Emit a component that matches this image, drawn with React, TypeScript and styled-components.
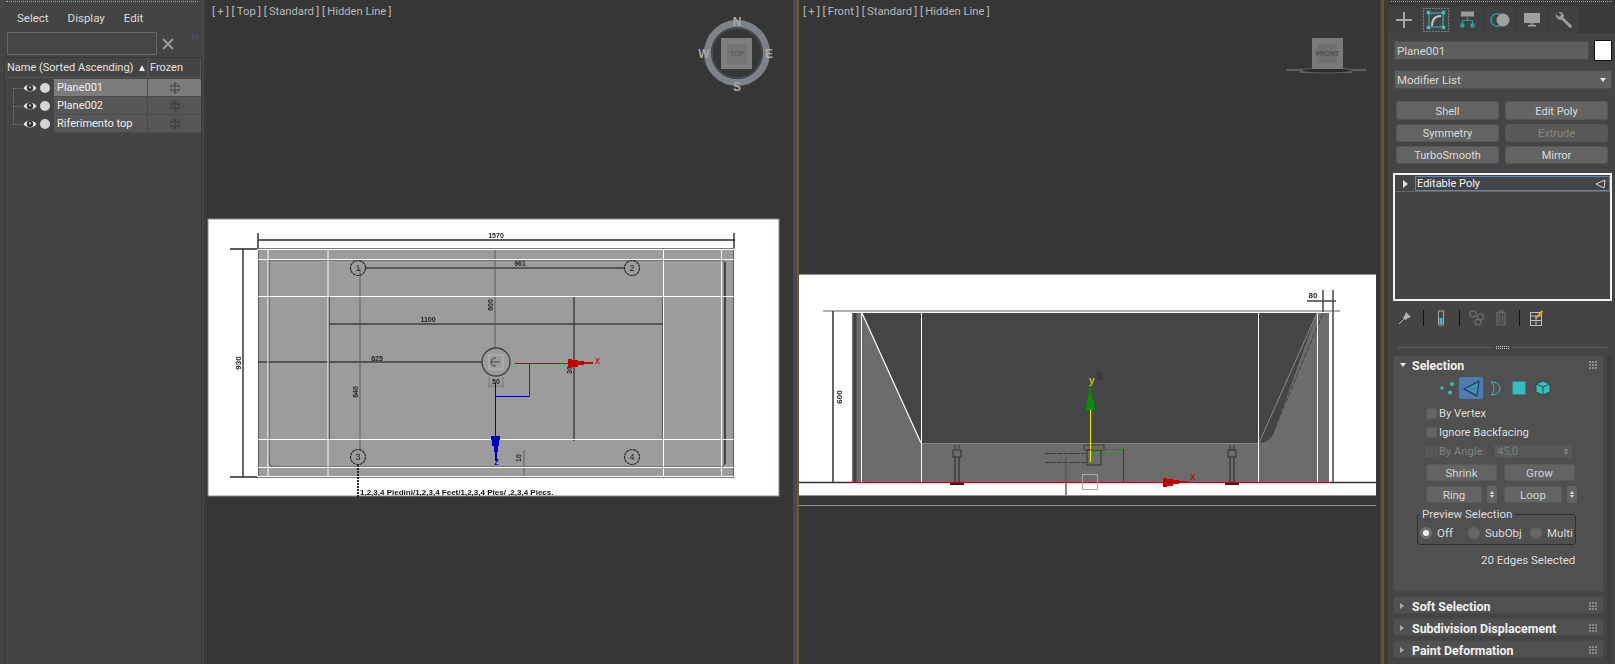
import React from 'react';
import styled, { createGlobalStyle } from 'styled-components';

const GlobalStyle = createGlobalStyle`
    html, body {
        margin: 0;
        padding: 0;
        background: #363636;
        overflow: hidden;
    }
    * {
        box-sizing: border-box;
    }
`;

const UI_FONT = `Roboto, "Noto Sans", "Liberation Sans", sans-serif`;

const Screen = styled.div`
    width: 1615px;
    height: 664px;
    display: flex;
    font-family: ${UI_FONT};
    font-size: 11px;
    color: #dcdcdc;
    overflow: hidden;
    background: #363636;
`;

/* scene explorer */

const Explorer = styled.div`
    width: 206px;
    flex: none;
    display: flex;
    flex-flow: column nowrap;
    background: #444;
    border-right: 2px solid #3a3a3a;
    padding: 1px 0 0 0;
`;

const Grip = styled.div<{ $inset: number }>`
    height: 1px;
    margin: 0 ${p => p.$inset}px;
    border-top: 1px dotted #a0a0a0;
`;

const MenuRow = styled.div`
    display: flex;
    gap: 19px;
    padding: 9px 0 0 17px;
    height: 28px;
    font-size: 11.5px;
`;

const SearchRow = styled.div`
    display: flex;
    align-items: flex-start;
    padding: 2px 0 0 7px;
    height: 27px;
`;

const SearchBox = styled.div`
    width: 150px;
    height: 23px;
    border: 1px solid #666;
    background: #454545;
`;

const ClearGlyph = styled.div`
    width: 22px;
    height: 23px;
    display: flex;
    align-items: center;
    justify-content: center;
`;

const More = styled.div`
    display: flex;
    margin: 2px 0 0 12px;
`;

const Outliner = styled.div`
    flex: 1;
    margin-left: 4px;
    width: 198px;
    border-left: 1px solid #383838;
    border-right: 1px solid #383838;
    border-top: 1px solid #383838;
`;

const HeaderRow = styled.div`
    display: grid;
    grid-template-columns: 143px 53px;
    height: 21px;
    padding-bottom: 1px;
`;

const HeaderCell = styled.div`
    display: flex;
    align-items: center;
    justify-content: space-between;
    padding: 0 0 0 1px;
    border: 1px solid #555;
    border-left-color: #4a4a4a;
    border-top: 0;
    color: #e2e2e2;
    font-size: 11px;
    white-space: nowrap;
`;

const SortArrow = styled.span`
    width: 0;
    height: 0;
    border-left: 3.5px solid transparent;
    border-right: 3.5px solid transparent;
    border-bottom: 6px solid #eee;
    margin-right: 2px;
`;

const Row = styled.div`
    position: relative;
    display: grid;
    grid-template-columns: 49px 94px 53px;
    height: 18px;
`;

const TreeGutter = styled.div`
    display: flex;
    align-items: center;
    padding-left: 18px;
    gap: 3px;
`;

const TreeLine = styled.div`
    position: absolute;
    left: 8px;
    top: 9px;
    width: 9px;
    height: 1px;
    border-top: 1px dotted #777;
`;

const TreeStem = styled.div`
    position: absolute;
    left: 8px;
    top: 9px;
    height: 36px;
    width: 1px;
    border-left: 1px dotted #777;
`;

const Dot = styled.span`
    width: 10px;
    height: 10px;
    border-radius: 50%;
    background: #d4d4d4;
`;

const NameCell = styled.div<{ $active?: boolean }>`
    display: flex;
    align-items: center;
    padding-left: 3px;
    background: ${p => (p.$active ? '#7c7c7c' : '#565656')};
    color: #f0f0f0;
    border-bottom: 1px solid #4a4a4a;
    border-right: 1px solid #484848;
    font-size: 11px;
`;

const FrozenCell = styled.div<{ $active?: boolean }>`
    display: flex;
    align-items: center;
    justify-content: center;
    background: ${p => (p.$active ? '#7c7c7c' : '#565656')};
    border-bottom: 1px solid #4a4a4a;
`;

/* viewports */

const Viewport = styled.div<{ $width: number }>`
    position: relative;
    width: ${p => p.$width}px;
    flex: none;
    height: 100%;
    background: #363636;
`;

const ViewportLabel = styled.div<{ $pad: number }>`
    padding: 5px 0 0 ${p => p.$pad}px;
    font-size: 11.2px;
    color: #b9b9b9;
`;

const Canvas = styled.svg`
    position: absolute;
    left: 0;
    top: 0;
`;

const Splitter = styled.div<{ $lead: number; $tail: number }>`
    width: ${p => p.$lead + p.$tail + 2}px;
    flex: none;
    display: flex;
    background: #3a3a3a;
    padding-right: ${p => p.$tail}px;
    border-left: ${p => p.$lead}px solid #4a4a4a;
`;

const GoldBar = styled.div`
    width: 2px;
    background: #6f5a24;
`;

/* command panel */

const Command = styled.div`
    flex: 1;
    background: #3a3a3a;
    padding-top: 1px;
    display: flex;
    flex-flow: column nowrap;
`;

const TabStrip = styled.div`
    display: flex;
    gap: 1px;
    height: 31px;
    padding: 4px 0 0 0;
`;

const Tab = styled.div<{ $active?: boolean }>`
    width: 31px;
    height: 27px;
    background: ${p => (p.$active ? '#444' : '#404040')};
    border-radius: 4px 4px 0 0;
    display: flex;
    align-items: center;
    justify-content: center;
`;

const CommandBody = styled.div`
    flex: 1;
    min-height: 0;
    background: #444;
    padding: 7px 3px 0 6px;
    display: flex;
    flex-flow: column nowrap;
`;

const NameRow = styled.div`
    display: flex;
    gap: 5px;
    height: 21px;
    align-items: center;
`;

const NameField = styled.div`
    width: 195px;
    height: 19px;
    background: #5e5e5e;
    border: 1px solid #4c4c4c;
    padding-left: 2px;
    display: flex;
    align-items: center;
    color: #d8d8d8;
    font-size: 11.5px;
`;

const Swatch = styled.div`
    width: 18px;
    height: 21px;
    background: #fff;
    border: 1px solid #111;
`;

const ModifierSelect = styled.div`
    margin-top: 9px;
    width: 218px;
    height: 19px;
    background: #5f5f5f;
    border: 1px solid #4c4c4c;
    padding: 0 5px 0 2px;
    display: flex;
    align-items: center;
    justify-content: space-between;
    color: #d8d8d8;
    font-size: 11.5px;
`;

const DownArrow = styled.span`
    width: 0;
    height: 0;
    border-left: 3.5px solid transparent;
    border-right: 3.5px solid transparent;
    border-top: 4px solid #e5e5e5;
`;

const ModifierGrid = styled.div`
    display: grid;
    grid-template-columns: 103px 103px;
    grid-template-rows: 19px 18px 18px;
    column-gap: 6px;
    row-gap: 4px;
    margin: 12px 0 0 2px;
`;

const Btn = styled.div<{ $off?: boolean }>`
    display: flex;
    align-items: center;
    justify-content: center;
    padding-top: 1px;
    border: 1px solid #565656;
    border-radius: 3px;
    color: ${p => (p.$off ? '#868686' : '#dcdcdc')};
    background: ${p => (p.$off ? '#585858' : '#636363')};
    font-size: 11px;
`;

const Stack = styled.div`
    margin: 9px 0 0 -1px;
    width: 219px;
    height: 128px;
    border: 2px solid #f2f2f2;
    background: #444;
`;

const StackRow = styled.div`
    display: flex;
    height: 17px;
    padding: 1px 0 0 0;
    border-bottom: 1px solid #666;
`;

const StackGutter = styled.div`
    width: 20px;
    display: flex;
    align-items: center;
    justify-content: center;
`;

const RightArrow = styled.span<{ $size?: number; $color?: string }>`
    width: 0;
    height: 0;
    border-top: ${p => p.$size ?? 4}px solid transparent;
    border-bottom: ${p => p.$size ?? 4}px solid transparent;
    border-left: ${p => (p.$size ?? 4) + 1}px solid ${p => p.$color ?? '#ddd'};
`;

const StackItem = styled.div`
    flex: 1;
    height: 15px;
    border: 1px solid #5f86b6;
    color: #f5f5f5;
    font-size: 11px;
    padding: 0 3px 0 1px;
    display: flex;
    align-items: center;
    justify-content: space-between;
`;

const StackTools = styled.div`
    display: flex;
    align-items: center;
    height: 20px;
    margin-top: 7px;
    padding-left: 4px;
`;

const ToolSep = styled.div`
    width: 1px;
    height: 16px;
    background: #111;
`;

const ToolSlot = styled.span<{ $left: number; $right: number }>`
    display: flex;
    margin: 0 ${p => p.$right}px 0 ${p => p.$left}px;
`;

const Divider = styled.div`
    display: flex;
    align-items: center;
    gap: 3px;
    margin: 17px 0 0 4px;
    height: 5px;
`;

const DividerLine = styled.div`
    width: 95px;
    height: 1px;
    background: #5f5f5f;
`;

const DividerDots = styled.div`
    width: 13px;
    height: 3px;
    border-top: 1px dotted #ccc;
    border-bottom: 1px dotted #ccc;
`;

const RolloutArea = styled.div`
    flex: 1;
    min-height: 0;
    margin: 5px 0 0 -1px;
    display: flex;
    gap: 3px;
`;

const RolloutScroll = styled.div`
    display: flex;
    flex-flow: column nowrap;
    gap: 4px;
`;

const ScrollTrack = styled.div`
    width: 5px;
    background: #3e3e3e;
`;

const Rollout = styled.div<{ $height: number }>`
    position: relative;
    width: 211px;
    height: ${p => p.$height}px;
    background: #505050;
    border: 1px solid #484848;
    border-radius: 3px;
    flex: none;
`;

const RolloutHead = styled.div`
    display: flex;
    align-items: center;
    height: 18px;
    padding: 0 6px 0 6px;
    font-weight: 700;
    font-size: 12.4px;
    color: #f0f0f0;
`;

const ArrowSlot = styled.span`
    width: 12px;
    display: flex;
`;

const RolloutTitle = styled.span`
    flex: 1;
`;

const GripDots = styled.span`
    width: 8px;
    height: 8px;
    background-image: radial-gradient(circle at 1px 1px, #8c8c8c 0.7px, transparent 1px);
    background-size: 3px 3px;
`;

const SubObjects = styled.div`
    display: flex;
    align-items: center;
    padding: 2px 0 0 41px;
    height: 26px;
    margin-bottom: 4px;
`;

const SubObjIcon = styled.div<{ $active?: boolean }>`
    width: 24px;
    height: 22px;
    display: flex;
    align-items: center;
    justify-content: center;
    border-radius: 2px;
    background: ${p => (p.$active ? '#4f7bb3' : 'transparent')};
`;

const CheckRow = styled.div<{ $off?: boolean }>`
    display: flex;
    align-items: center;
    gap: 2px;
    height: 19px;
    padding-left: 32px;
    font-size: 11.2px;
    color: ${p => (p.$off ? '#828282' : '#dedede')};
`;

const Check = styled.span<{ $off?: boolean }>`
    width: 11px;
    height: 11px;
    background: ${p => (p.$off ? '#555' : '#646464')};
    border: 1px solid #5a5a5a;
    border-radius: 1px;
`;

const Spinner = styled.div`
    position: absolute;
    left: 99px;
    width: 80px;
    height: 15px;
    background: #585858;
    border: 1px solid #4e4e4e;
    color: #7e7e7e;
    padding: 0 4px 0 3px;
    display: flex;
    align-items: center;
    justify-content: space-between;
    border-radius: 1px;
`;

const SpinArrows = styled.span<{ $color?: string }>`
    display: flex;
    flex-flow: column nowrap;
    gap: 1px;
    align-items: center;
    &::before, &::after {
        content: '';
        width: 0;
        height: 0;
        border-left: 2.5px solid transparent;
        border-right: 2.5px solid transparent;
    }
    &::before {
        border-bottom: 3px solid ${p => p.$color ?? '#8a8a8a'};
    }
    &::after {
        border-top: 3px solid ${p => p.$color ?? '#8a8a8a'};
    }
`;

const ButtonLine = styled.div<{ $top: number }>`
    display: flex;
    margin: ${p => p.$top}px 0 0 32px;
    height: 17px;
    gap: 7px;
`;

const SmallBtn = styled.div<{ $width: number }>`
    width: ${p => p.$width}px;
    display: flex;
    align-items: center;
    justify-content: center;
    background: #636363;
    border: 1px solid #5a5a5a;
    border-radius: 3px;
    color: #d4d4d4;
    font-size: 11.5px;
`;

const SpinBox = styled.div`
    width: 10px;
    margin-left: -2px;
    display: flex;
    align-items: center;
    justify-content: center;
    background: #636363;
    border-radius: 2px;
`;

const PreviewGroup = styled.fieldset`
    margin: 6px 0 0 23px;
    width: 159px;
    height: 36px;
    padding: 0 0 0 2px;
    border: 1px solid #303030;
    border-radius: 3px;
    display: flex;
    align-items: center;
    legend {
        padding: 0 2px;
        line-height: 10px;
        color: #dcdcdc;
        font-size: 11.5px;
    }
`;

const RadioItem = styled.div<{ $width: number }>`
    width: ${p => p.$width}px;
    display: flex;
    align-items: center;
    gap: 5px;
    color: #dcdcdc;
    font-size: 11.5px;
    margin-top: 2px;
`;

const Radio = styled.span<{ $on?: boolean }>`
    width: 12px;
    height: 12px;
    flex: none;
    border-radius: 50%;
    background: ${p => (p.$on ? '#707070' : '#646464')};
    display: flex;
    align-items: center;
    justify-content: center;
    &::after {
        content: '';
        width: 6px;
        height: 6px;
        border-radius: 50%;
        background: ${p => (p.$on ? '#eee' : 'transparent')};
    }
`;

const Status = styled.div`
    margin: 8px 0 0 87px;
    color: #dedede;
    font-size: 11.5px;
`;

function Eye() {
    return (
        <svg width="14" height="10" viewBox="0 0 14 10">
            <path d="M0.5 5 C3 0.5 11 0.5 13.5 5 C11 9.5 3 9.5 0.5 5 Z" fill="#e8e8e8" />
            <circle cx="7" cy="5" r="3.2" fill="#333" />
            <circle cx="7" cy="4.4" r="1.1" fill="#bbb" />
        </svg>
    );
}

function Snow({ color }: { color: string }) {
    return (
        <svg width="12" height="12" viewBox="0 0 12 12" stroke={color} strokeWidth="1" fill="none">
            <path d="M6 0 V12 M1 4 H11 M1 8 H11 M4 1 L6 3 L8 1 M4 11 L6 9 L8 11 M2 2.5 V5.5 M10 2.5 V5.5 M2 6.5 V9.5 M10 6.5 V9.5" />
        </svg>
    );
}

const objects = [
    { name: 'Plane001', active: true },
    { name: 'Plane002' },
    { name: 'Riferimento top' },
];

const collapsed = ['Soft Selection', 'Subdivision Displacement', 'Paint Deformation'];

const BLACK = '#2a2a2a';
const WHITE = '#ffffff';
const TEAL = '#39bcbc';

/* stepped cone of a transform gizmo, drawn pointing right from 0,0 */
function Cone({ color, transform }: { color: string; transform: string }) {
    return (
        <path
            transform={transform}
            fill={color}
            d="M0 -4.5 H4 V-3.5 H10 V-2.5 H16 V-1.5 H25 V0.5 H16 V1.5 H10 V3.5 H4 V4.5 H0 Z"
        />
    );
}

function TopView() {
    const whiteX = [257, 267.5, 327.5, 663, 721, 734];
    const whiteY = [249, 259, 296, 439, 467, 476];
    const holes = [
        { x: 358, y: 268, n: '1' },
        { x: 632, y: 268, n: '2' },
        { x: 358, y: 457, n: '3' },
        { x: 632, y: 457, n: '4' },
    ];
    return (
        <Canvas width={587} height={664} viewBox="206 0 587 664">
            <defs>
                <filter id="soft" x="-5%" y="-5%" width="110%" height="110%">
                    <feGaussianBlur stdDeviation="0.6" />
                </filter>
            </defs>
            {/* view cube */}
            <g fontFamily="Liberation Sans, sans-serif" fontWeight="700" fontSize="12" fill="#a8a8a8" textAnchor="middle">
                <circle cx="737" cy="53" r="29.5" fill="none" stroke="#7c8288" strokeWidth="7" />
                <circle cx="737" cy="53" r="25" fill="none" stroke="#50545a" strokeWidth="1" />
                <rect x="721" y="38" width="31" height="31" fill="#7e7e7e" />
                <rect x="727" y="44" width="20" height="20" fill="#747474" />
                <text x="737" y="26">N</text>
                <text x="737" y="91">S</text>
                <text x="704" y="58">W</text>
                <text x="769" y="58">E</text>
                <text x="737" y="56" fontSize="7" fill="#5e5e5e">TOP</text>
            </g>
            {/* reference sheet */}
            <rect x="208" y="219" width="571" height="277" fill="#fff" stroke="#8a8a8a" />
            <g filter="url(#soft)" stroke={BLACK} fill="none">
                <rect x="258" y="249" width="476" height="228" fill="#9c9c9c" stroke="#444" strokeWidth="1.4" />
                <path d="M258 240 H735 M258 233 V248 M734 233 V248 M230 249 H258 M230 477 H258 M243 249 V477" strokeWidth="1.4" />
                <path d="M269 260 H720 Q725 260 725 265 V462 Q725 467 720 467 H275 Q269 467 269 462 Z" stroke="#444" />
                <path d="M725 262 V464" strokeWidth="2" stroke="#444" />
                <path d="M329 440 V297 M663 297 V440 M329 324 H664 M574 297 V441" strokeWidth="1.4" stroke="#3c3c3c" />
                <path d="M258 362 H482 M365 268 H625" strokeWidth="1.5" stroke="#3c3c3c" />
                <path d="M360 268 V450 M495 249 V348 M524 450 V478" stroke="#5a5a5a" />
                <path d="M358 465 V497" strokeWidth="2" strokeDasharray="2 1" />
                {holes.map(h => (
                    <circle key={h.n} cx={h.x} cy={h.y} r="7.5" strokeDasharray="3 0.6" strokeWidth="1.2" />
                ))}
                <circle cx="496" cy="362" r="14" stroke="#444" strokeWidth="1.4" />
                <rect x="489" y="355" width="14" height="14" stroke="#b8b8b8" />
                <path d="M496 358 Q491 358 491 362 Q491 366 496 366 M491 362 H500" stroke="#444" />
                <path d="M489 377 V388 M503 377 V388 M489 386 H503" stroke="#777" />
                <g fontFamily="Liberation Sans, sans-serif" fontSize="7" fontWeight="700" fill="#222" stroke="none" textAnchor="middle">
                    <text x="496" y="238">1570</text>
                    <text x="520" y="266">961</text>
                    <text x="428" y="322">1100</text>
                    <text x="377" y="361">625</text>
                    <text x="496" y="384">50</text>
                    <text transform="translate(521 458) rotate(-90)">10</text>
                    <text transform="translate(241 363) rotate(-90)" fontSize="8">930</text>
                    <text transform="translate(493 305) rotate(-90)">600</text>
                    <text transform="translate(358 392) rotate(-90)">640</text>
                    <text transform="translate(572 370) rotate(-90)">30</text>
                    {holes.map(h => (
                        <text key={h.n} x={h.x} y={h.y + 3} fontSize="9" fontWeight="400">{h.n}</text>
                    ))}
                    <text x="360" y="495" fontSize="8" textAnchor="start" fill="#111">
                        1,2,3,4 Piedini/1,2,3,4 Feet/1,2,3,4 Pies/ ,2,3,4 Piecs.
                    </text>
                </g>
            </g>
            {/* wireframe on top of the sheet */}
            <g stroke={WHITE} strokeWidth="1">
                {whiteX.map(x => (
                    <line key={x} x1={x + 0.5} x2={x + 0.5} y1={249} y2={477} />
                ))}
                {whiteY.map(y => (
                    <line key={y} x1={257} x2={735} y1={y + 0.5} y2={y + 0.5} />
                ))}
            </g>
            {/* gizmo */}
            <g fill="none" strokeWidth="1">
                <path d="M495.5 383 V437 M495.5 396.5 H529" stroke="#0000c0" />
                <path d="M515 363.5 H569 M529.5 363.5 V397" stroke="#c00000" />
            </g>
            <Cone color="#c00000" transform="translate(568 363.5)" />
            <Cone color="#0000c0" transform="translate(495.5 436) rotate(90)" />
            <g fontFamily="Liberation Sans, sans-serif" fontSize="10">
                <text x="595" y="364" fill="#c00000">x</text>
                <text x="494" y="465" fill="#0000c0">z</text>
            </g>
        </Canvas>
    );
}

function Bolt({ x }: { x: number }) {
    return (
        <g stroke="#3a3a3a" fill="none">
            <path d={`M${x - 2} 450 V445 M${x + 2} 450 V445`} />
            <rect x={x - 4} y={450} width={8} height={7} strokeWidth="1.2" />
            <path d={`M${x - 2} 457 V482 M${x + 2} 457 V482`} strokeWidth="1.4" />
            <path d={`M${x - 7} 484 H${x + 7}`} strokeWidth="2" stroke="#222" />
        </g>
    );
}

function FrontView() {
    const whiteX = [861, 921, 1258, 1317, 1329];
    return (
        <Canvas width={581} height={664} viewBox="799 0 581 664">
            <defs>
                <filter id="softFront" x="-5%" y="-5%" width="110%" height="110%">
                    <feGaussianBlur stdDeviation="0.6" />
                </filter>
            </defs>
            {/* view cube */}
            <g fontFamily="Liberation Sans, sans-serif" textAnchor="middle">
                <path d="M1286 70 H1366 M1300 72 H1352" stroke="#8a8a8a" strokeWidth="1" />
                <ellipse cx="1327" cy="70.5" rx="26" ry="2.5" fill="#2c2c2c" stroke="#777" strokeWidth="0.6" />
                <rect x="1312" y="38" width="31" height="31" fill="#7a7a7a" />
                <rect x="1318" y="44" width="19" height="19" fill="#707070" />
                <text x="1327.5" y="56" fontSize="7" fontWeight="700" fill="#505050">FRONT</text>
            </g>
            {/* reference sheet */}
            <rect x="799" y="274" width="577" height="222" fill="#fff" />
            <path d="M799 274.5 H1376 M799 495.5 H1376 M799 505.5 H1376" stroke="#8e8e8e" />
            <g filter="url(#softFront)" fill="none">
                <rect x="852" y="312" width="477" height="170" fill="#6c6c6c" />
                <path d="M862 313 L921 443 H1259 Q1270 443 1274 432 L1317 313 Z" fill="#444" />
                <path d="M921 443.5 H1259" stroke="#868686" />
                <path d="M1259 443 L1317 313" stroke="#8a8a8a" />
                <path d="M1272 435 L1323 313" stroke="#404040" strokeDasharray="5 2" />
                <path d="M855 313 V482" stroke="#404040" strokeWidth="3" />
                <path d="M823 311 H1340" stroke="#b0b0b0" strokeWidth="2" />
                <path d="M833 311 V482 M799 482.5 H852 M1330 482.5 H1376" stroke="#333" strokeWidth="1.5" />
                <path d="M1333 290 V482 M1323 290 V312 M1307 301 H1336" stroke="#444" strokeWidth="1.5" />
                <Bolt x={957} />
                <Bolt x={1232} />
                <path d="M1045 453.5 H1087 M1045 462.5 H1087" stroke="#3a3a3a" strokeDasharray="5 1" />
                <path d="M1066 457 V495" stroke="#555" strokeWidth="1.4" />
                <rect x="1087" y="450" width="14" height="15" stroke="#3a3a3a" strokeWidth="1.2" />
                <rect x="1084" y="445" width="20" height="5" stroke="#3a3a3a" />
                <g fontFamily="Liberation Sans, sans-serif" fontWeight="700" fontSize="8" fill="#222" stroke="none" textAnchor="middle">
                    <text x="1313" y="298">80</text>
                    <text transform="translate(842 397) rotate(-90)">600</text>
                    <text transform="translate(1102 376) rotate(-90)" fill="#333">35</text>
                </g>
            </g>
            <g stroke={WHITE}>
                {whiteX.map(x => (
                    <line key={x} x1={x + 0.5} x2={x + 0.5} y1={312} y2={482} />
                ))}
                <line x1={852} x2={1330} y1={312.5} y2={312.5} />
                <line x1={862} y1={313} x2={921} y2={443} strokeWidth="1.2" />
            </g>
            <path d="M852 482.5 H1330" stroke="#c00000" strokeWidth="1.2" />
            <rect x="1082.5" y="474.5" width="15" height="15" fill="none" stroke="#aaa" />
            {/* gizmo */}
            <g fill="none">
                <path d="M1090.5 408 V462" stroke="#f0f000" />
                <path d="M1090 449.5 H1123" stroke="#00a000" />
                <path d="M1123.5 449 V482" stroke="#c00000" />
            </g>
            <Cone color="#c00000" transform="translate(1163 482.5)" />
            <Cone color="#009000" transform="translate(1090.5 410) rotate(-90)" />
            <g fontFamily="Liberation Sans, sans-serif" fontSize="11">
                <text x="1190" y="480" fill="#c00000">x</text>
                <text x="1089" y="384" fill="#e8e800">y</text>
            </g>
        </Canvas>
    );
}

export default function App() {
    return (
        <>
            <GlobalStyle />
            <Screen>
                <Explorer>
                    <Grip $inset={6} />
                    <MenuRow>
                        <span>Select</span>
                        <span>Display</span>
                        <span>Edit</span>
                    </MenuRow>
                    <SearchRow>
                        <SearchBox />
                        <ClearGlyph>
                            <svg width="12" height="12" viewBox="0 0 12 12">
                                <path d="M1 1 L11 11 M11 1 L1 11" stroke="#9a9a9a" strokeWidth="2" />
                            </svg>
                        </ClearGlyph>
                        <More>
                            <svg width="9" height="6" viewBox="0 0 9 6" fill="none" stroke="#50508c">
                                <path d="M0.5 0.5 L3.5 3 L0.5 5.5 M4.5 0.5 L7.5 3 L4.5 5.5" />
                            </svg>
                        </More>
                    </SearchRow>
                    <Outliner>
                        <HeaderRow>
                            <HeaderCell>
                                Name (Sorted Ascending)
                                <SortArrow />
                            </HeaderCell>
                            <HeaderCell>Frozen</HeaderCell>
                        </HeaderRow>
                        {objects.map((o, i) => (
                            <Row key={o.name}>
                                {i === 0 && <TreeStem />}
                                <TreeLine />
                                <TreeGutter>
                                    <Eye />
                                    <Dot />
                                </TreeGutter>
                                <NameCell $active={o.active}>{o.name}</NameCell>
                                <FrozenCell $active={o.active}>
                                    <Snow color={o.active ? '#484848' : '#3c3c3c'} />
                                </FrozenCell>
                            </Row>
                        ))}
                    </Outliner>
                </Explorer>

                <Viewport $width={587}>
                    <ViewportLabel $pad={6}>[&#8201;+&#8201;] [&#8201;Top&#8201;] [&#8201;Standard&#8201;] [&#8201;Hidden Line&#8201;]</ViewportLabel>
                    <TopView />
                </Viewport>
                <Splitter $lead={4} $tail={0}>
                    <GoldBar />
                </Splitter>
                <Viewport $width={581}>
                    <ViewportLabel $pad={4}>[&#8201;+&#8201;] [&#8201;Front&#8201;] [&#8201;Standard&#8201;] [&#8201;Hidden Line&#8201;]</ViewportLabel>
                    <FrontView />
                </Viewport>
                <Splitter $lead={2} $tail={4}>
                    <GoldBar />
                </Splitter>

                <Command>
                    <Grip $inset={3} />
                    <TabStrip>
                        <Tab>
                            <svg width="18" height="18" viewBox="0 0 18 18">
                                <path d="M9 1 V17 M1 9 H17" stroke="#a8a8a8" strokeWidth="2" />
                            </svg>
                        </Tab>
                        <Tab $active>
                            <svg width="26" height="24" viewBox="0 0 26 24" fill="none">
                                <rect x="0.5" y="0.5" width="25" height="23" stroke="#b0b0b0" strokeDasharray="1 2" />
                                <path d="M6 5 H20 V19 H6 Z" stroke={TEAL} strokeWidth="1" />
                                <path d="M9 18 C9 12 12 8 18 8" stroke="#c4c4c4" strokeWidth="2" />
                                <path d="M4 3 h3 v3 h-3 Z M19 3 h3 v3 h-3 Z M4 18 h3 v3 h-3 Z M19 18 h3 v3 h-3 Z" fill={TEAL} stroke={TEAL} strokeWidth="0.5" />
                            </svg>
                        </Tab>
                        <Tab>
                            <svg width="15" height="17" viewBox="0 0 15 17" fill="none">
                                <rect x="1" y="0.5" width="13" height="5" fill="#9a9a9a" />
                                <path d="M7.5 6 V10 M2.5 13 V9.5 H12.5 V13" stroke="#2f9c9c" />
                                <rect x="0.5" y="12.5" width="4" height="4" fill="#2f9c9c" />
                                <rect x="10.5" y="12.5" width="4" height="4" fill="#2f9c9c" />
                            </svg>
                        </Tab>
                        <Tab>
                            <svg width="20" height="16" viewBox="0 0 20 16" fill="none">
                                <circle cx="6" cy="8" r="6" stroke="#2a8a8a" />
                                <circle cx="8" cy="8" r="6.5" stroke="#2f9c9c" />
                                <circle cx="13" cy="8" r="6.5" fill="#a0a0a0" />
                            </svg>
                        </Tab>
                        <Tab>
                            <svg width="18" height="16" viewBox="0 0 18 16">
                                <rect x="1" y="1" width="16" height="10" fill="#a0a0a0" />
                                <rect x="7" y="11" width="4" height="2" fill="#777" />
                                <rect x="5" y="13" width="8" height="1.5" fill="#a0a0a0" />
                            </svg>
                        </Tab>
                        <Tab>
                            <svg width="18" height="18" viewBox="0 0 18 18" fill="none">
                                <path d="M6 6 L15.5 15.5" stroke="#9a9a9a" strokeWidth="3" strokeLinecap="round" />
                                <path d="M1 3 L4 6 L6.5 4 L3.5 1 A5 5 0 0 1 9 5 A5 5 0 0 1 6 9 A5 5 0 0 1 1 3 Z" fill="#9a9a9a" />
                            </svg>
                        </Tab>
                    </TabStrip>
                    <CommandBody>
                        <NameRow>
                            <NameField>Plane001</NameField>
                            <Swatch />
                        </NameRow>
                        <ModifierSelect>
                            Modifier List
                            <DownArrow />
                        </ModifierSelect>
                        <ModifierGrid>
                            <Btn>Shell</Btn>
                            <Btn>Edit Poly</Btn>
                            <Btn>Symmetry</Btn>
                            <Btn $off>Extrude</Btn>
                            <Btn>TurboSmooth</Btn>
                            <Btn>Mirror</Btn>
                        </ModifierGrid>
                        <Stack>
                            <StackRow>
                                <StackGutter>
                                    <RightArrow />
                                </StackGutter>
                                <StackItem>
                                    Editable Poly
                                    <svg width="11" height="10" viewBox="0 0 11 10" fill="none">
                                        <path d="M1 5 L10 1 L9 9 Z" stroke="#d8d8d8" />
                                    </svg>
                                </StackItem>
                            </StackRow>
                        </Stack>
                        <StackTools>
                            <ToolSlot $left={0} $right={11}>
                                <svg width="14" height="14" viewBox="0 0 14 14">
                                    <path d="M8 1 L13 6 L10 7 L7.5 9 L5 7 L7 4 Z" fill="#b4b4b4" />
                                    <path d="M6 8 L1 13" stroke="#b4b4b4" />
                                </svg>
                            </ToolSlot>
                            <ToolSep />
                            <ToolSlot $left={13} $right={14}>
                                <svg width="8" height="16" viewBox="0 0 8 16" fill="none">
                                    <path d="M1 1 H7 M1.5 1 V15 H6.5 V1" stroke="#a8a8a8" />
                                    <rect x="2.5" y="8" width="3" height="6" fill={TEAL} />
                                </svg>
                            </ToolSlot>
                            <ToolSep />
                            <ToolSlot $left={9} $right={10}>
                                <svg width="16" height="16" viewBox="0 0 16 16" fill="none" stroke="#666" strokeWidth="1.5">
                                    <circle cx="4" cy="4" r="3" />
                                    <circle cx="11.5" cy="7" r="3" />
                                    <circle cx="9" cy="12" r="3" />
                                </svg>
                            </ToolSlot>
                            <ToolSlot $left={0} $right={12}>
                                <svg width="12" height="16" viewBox="0 0 12 16" fill="none" stroke="#666" strokeWidth="1.4">
                                    <path d="M0.5 3 H11.5 M4 3 V1 H8 V3 M2 3 V15 H10 V3 M4.5 5 V13 M7.5 5 V13" />
                                </svg>
                            </ToolSlot>
                            <ToolSep />
                            <ToolSlot $left={10} $right={0}>
                                <svg width="14" height="16" viewBox="0 0 14 16" fill="none">
                                    <rect x="0.5" y="2.5" width="11" height="13" stroke="#c0c0c0" />
                                    <path d="M0.5 6 H11.5 M0.5 10.5 H11.5 M6 6 V15.5" stroke="#c0c0c0" />
                                    <path d="M6 8 L12.5 1" stroke="#e8a820" strokeWidth="2" />
                                </svg>
                            </ToolSlot>
                        </StackTools>
                        <Divider>
                            <DividerLine />
                            <DividerDots />
                            <DividerLine />
                        </Divider>
                        <RolloutArea>
                            <RolloutScroll>
                                <Rollout $height={237}>
                                    <RolloutHead>
                                        <ArrowSlot>
                                            <DownArrow />
                                        </ArrowSlot>
                                        <RolloutTitle>Selection</RolloutTitle>
                                        <GripDots />
                                    </RolloutHead>
                                    <SubObjects>
                                        <SubObjIcon>
                                            <svg width="14" height="14" viewBox="0 0 14 14" fill={TEAL}>
                                                <circle cx="2" cy="7" r="1.8" />
                                                <circle cx="12" cy="3" r="2" />
                                                <circle cx="10" cy="11.5" r="2" />
                                            </svg>
                                        </SubObjIcon>
                                        <SubObjIcon $active>
                                            <svg width="17" height="17" viewBox="0 0 17 17" fill="none" stroke="#1f3f5c" strokeWidth="1.2">
                                                <path d="M1 9 L16 1 L14 16 Z" />
                                                <path d="M5 9 L13.5 4.5 L12.5 12.5 Z" stroke="#2ca8a8" />
                                            </svg>
                                        </SubObjIcon>
                                        <SubObjIcon>
                                            <svg width="11" height="15" viewBox="0 0 11 15" fill="none">
                                                <path d="M1 1 C7 1 10 4 10 7.5 C10 11 7 14 1 14 C5 11 5 4 1 1 Z" stroke={TEAL} />
                                            </svg>
                                        </SubObjIcon>
                                        <SubObjIcon>
                                            <svg width="14" height="14" viewBox="0 0 14 14">
                                                <rect x="0.5" y="0.5" width="13" height="13" fill={TEAL} stroke="#2a8a8a" />
                                            </svg>
                                        </SubObjIcon>
                                        <SubObjIcon>
                                            <svg width="16" height="16" viewBox="0 0 16 16" fill={TEAL} stroke="#1f3f3f" strokeWidth="0.8">
                                                <path d="M8 1 L15 4 V12 L8 15 L1 12 V4 Z" />
                                                <path d="M1 4 L8 7 L15 4 M8 7 V15" fill="none" />
                                            </svg>
                                        </SubObjIcon>
                                    </SubObjects>
                                    <CheckRow>
                                        <Check />
                                        By Vertex
                                    </CheckRow>
                                    <CheckRow>
                                        <Check />
                                        Ignore Backfacing
                                    </CheckRow>
                                    <CheckRow $off>
                                        <Check $off />
                                        By Angle:
                                        <Spinner>
                                            45,0
                                            <SpinArrows />
                                        </Spinner>
                                    </CheckRow>
                                    <ButtonLine $top={3}>
                                        <SmallBtn $width={71}>Shrink</SmallBtn>
                                        <SmallBtn $width={71}>Grow</SmallBtn>
                                    </ButtonLine>
                                    <ButtonLine $top={5}>
                                        <SmallBtn $width={56}>Ring</SmallBtn>
                                        <SpinBox>
                                            <SpinArrows $color="#ddd" />
                                        </SpinBox>
                                        <SmallBtn $width={58}>Loop</SmallBtn>
                                        <SpinBox>
                                            <SpinArrows $color="#ddd" />
                                        </SpinBox>
                                    </ButtonLine>
                                    <PreviewGroup>
                                        <legend>Preview Selection</legend>
                                        <RadioItem $width={48}>
                                            <Radio $on />
                                            Off
                                        </RadioItem>
                                        <RadioItem $width={62}>
                                            <Radio />
                                            SubObj
                                        </RadioItem>
                                        <RadioItem $width={44}>
                                            <Radio />
                                            Multi
                                        </RadioItem>
                                    </PreviewGroup>
                                    <Status>20 Edges Selected</Status>
                                </Rollout>
                                {collapsed.map(title => (
                                    <Rollout key={title} $height={18}>
                                        <RolloutHead>
                                            <ArrowSlot>
                                                <RightArrow $size={3} $color="#aaa" />
                                            </ArrowSlot>
                                            <RolloutTitle>{title}</RolloutTitle>
                                            <GripDots />
                                        </RolloutHead>
                                    </Rollout>
                                ))}
                            </RolloutScroll>
                            <ScrollTrack />
                        </RolloutArea>
                    </CommandBody>
                </Command>
            </Screen>
        </>
    );
}
